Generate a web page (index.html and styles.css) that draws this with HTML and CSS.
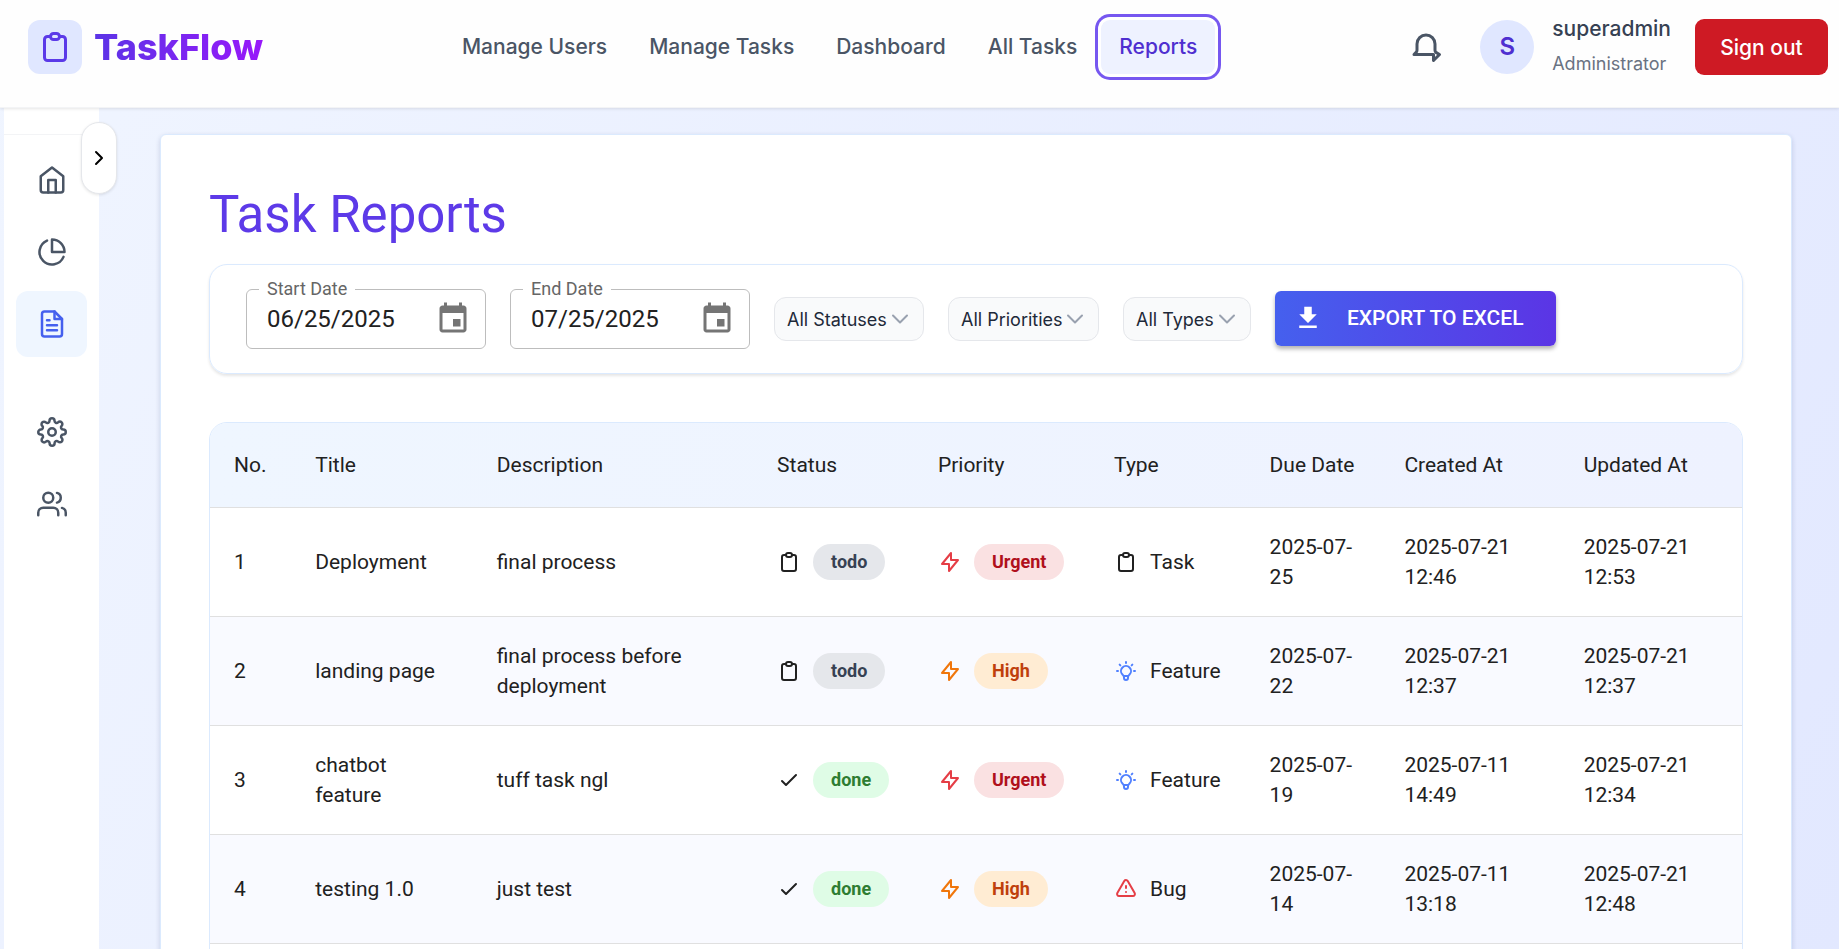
FILE: index.html
```html
<!DOCTYPE html>
<html lang="en">
<head>
<meta charset="utf-8">
<title>TaskFlow - Task Reports</title>
<link rel="stylesheet" href="styles.css">
</head>
<body>
<svg class="sprite" aria-hidden="true">
  <symbol id="clipboard" viewBox="0 0 24 24"><path d="M9 5H7a2 2 0 00-2 2v12a2 2 0 002 2h10a2 2 0 002-2V7a2 2 0 00-2-2h-2M9 5a2 2 0 002 2h2a2 2 0 002-2M9 5a2 2 0 012-2h2a2 2 0 012 2"/></symbol>
  <symbol id="bolt" viewBox="0 0 24 24"><path d="M13 10V3L4 14h7v7l9-11h-7z"/></symbol>
  <symbol id="check" viewBox="0 0 24 24"><path d="M5 13l4 4L19 7"/></symbol>
  <symbol id="bulb" viewBox="0 0 24 24"><path d="M9.663 17h4.673M12 3v1m6.364 1.636l-.707.707M21 12h-1M4 12H3m3.343-5.657l-.707-.707m2.828 9.9a5 5 0 117.072 0l-.548.547A3.374 3.374 0 0014 18.469V19a2 2 0 11-4 0v-.531c0-.895-.356-1.754-.988-2.386l-.548-.547z"/></symbol>
  <symbol id="warning" viewBox="0 0 24 24"><path d="M12 9v2m0 4h.01m-6.938 4h13.856c1.54 0 2.502-1.667 1.732-3L13.732 4c-.77-1.333-2.694-1.333-3.464 0L3.34 16c-.77 1.333.192 3 1.732 3z"/></symbol>
  <symbol id="calendar" viewBox="0 0 24 24"><path d="M17 12h-5v5h5v-5zM16 1v2H8V1H6v2H5c-1.11 0-1.99.9-1.99 2L3 19c0 1.1.89 2 2 2h14c1.1 0 2-.9 2-2V5c0-1.1-.9-2-2-2h-1V1h-2zm3 18H5V8h14v11z"/></symbol>
  <symbol id="chevron" viewBox="0 0 24 24"><path d="M5 8.500l7 7 7-7"/></symbol>
</svg>
<div class="app">
  <header class="topbar">
    <a class="brand" href="#">
      <span class="brand-mark"><svg class="icon icon-xl"><use href="#clipboard"/></svg></span>
      <span class="brand-name">TaskFlow</span>
    </a>
    <nav class="nav">
      <a href="#">Manage Users</a>
      <a href="#">Manage Tasks</a>
      <a href="#">Dashboard</a>
      <a href="#">All Tasks</a>
      <a href="#" class="active">Reports</a>
    </nav>
    <div class="account">
      <button class="bell" aria-label="Notifications"><svg class="icon icon-xl" viewBox="0 0 24 24"><path d="M4 17l1.400-1.400A2 2 0 006 14.200V10a6 6 0 0112 0v4.200a2 2 0 00.600 1.400L21 17l-4 4v-4H4z"/></svg></button>
      <span class="avatar">S</span>
      <div class="user"><span class="user-name">superadmin</span><span class="user-role">Administrator</span></div>
      <button class="signout">Sign out</button>
    </div>
  </header>
  <div class="body">
    <aside class="sidebar">
      <div class="side-head"><button class="toggle" aria-label="Expand sidebar"><svg class="icon" viewBox="0 0 24 24"><path d="M9 18l6-6-6-6"/></svg></button></div>
      <a href="#" aria-label="Home"><svg class="icon icon-lg" viewBox="0 0 24 24"><path d="M3 9l9-7 9 7v11a2 2 0 0 1-2 2H5a2 2 0 0 1-2-2z"/><path d="M9 22V12h6v10"/></svg></a>
      <a href="#" aria-label="Analytics"><svg class="icon icon-lg" viewBox="0 0 24 24"><path d="M21.210 15.890A10 10 0 1 1 8 2.830"/><path d="M22 12A10 10 0 0 0 12 2v10z"/></svg></a>
      <a href="#" class="active" aria-label="Reports"><svg class="icon icon-lg" viewBox="0 0 24 24"><path d="M14 2H6a2 2 0 0 0-2 2v16a2 2 0 0 0 2 2h12a2 2 0 0 0 2-2V8z"/><path d="M14 2v6h6M16 13H8M16 17H8M10 9H8"/></svg></a>
      <a href="#" class="second-group" aria-label="Settings"><svg class="icon icon-lg" viewBox="0 0 24 24"><circle cx="12" cy="12" r="3"/><path d="M19.4 15a1.65 1.65 0 0 0 .33 1.82l.06.06a2 2 0 0 1 0 2.83 2 2 0 0 1-2.83 0l-.06-.06a1.65 1.65 0 0 0-1.82-.33 1.65 1.65 0 0 0-1 1.51V21a2 2 0 0 1-2 2 2 2 0 0 1-2-2v-.09A1.65 1.65 0 0 0 9 19.4a1.65 1.65 0 0 0-1.82.33l-.06.06a2 2 0 0 1-2.83 0 2 2 0 0 1 0-2.83l.06-.06a1.65 1.65 0 0 0 .33-1.82 1.65 1.65 0 0 0-1.51-1H3a2 2 0 0 1-2-2 2 2 0 0 1 2-2h.09A1.65 1.65 0 0 0 4.6 9a1.65 1.65 0 0 0-.33-1.82l-.06-.06a2 2 0 0 1 0-2.83 2 2 0 0 1 2.83 0l.06.06a1.65 1.65 0 0 0 1.82.33H9a1.65 1.65 0 0 0 1-1.51V3a2 2 0 0 1 2-2 2 2 0 0 1 2 2v.09a1.65 1.65 0 0 0 1 1.51 1.65 1.65 0 0 0 1.82-.33l.06-.06a2 2 0 0 1 2.83 0 2 2 0 0 1 0 2.83l-.06.06a1.65 1.65 0 0 0-.33 1.82V9a1.65 1.65 0 0 0 1.51 1H21a2 2 0 0 1 2 2 2 2 0 0 1-2 2h-.09a1.65 1.65 0 0 0-1.51 1z"/></svg></a>
      <a href="#" aria-label="Team"><svg class="icon icon-lg" viewBox="0 0 24 24"><path d="M17 21v-2a4 4 0 0 0-4-4H5a4 4 0 0 0-4 4v2"/><circle cx="9" cy="7" r="4"/><path d="M23 21v-2a4 4 0 0 0-3-3.870M16 3.130a4 4 0 0 1 0 7.750"/></svg></a>
    </aside>
    <main class="card">
      <h1>Task Reports</h1>
      <form class="filters">
        <fieldset class="date">
          <legend><label for="start">Start Date</label></legend>
          <input id="start" type="text" value="06/25/2025">
          <button type="button" aria-label="Choose start date"><svg class="solid"><use href="#calendar"/></svg></button>
        </fieldset>
        <fieldset class="date">
          <legend><label for="end">End Date</label></legend>
          <input id="end" type="text" value="07/25/2025">
          <button type="button" aria-label="Choose end date"><svg class="solid"><use href="#calendar"/></svg></button>
        </fieldset>
        <div class="select status"><select aria-label="Status"><option>All Statuses</option></select><svg class="icon"><use href="#chevron"/></svg></div>
        <div class="select priority"><select aria-label="Priority"><option>All Priorities</option></select><svg class="icon"><use href="#chevron"/></svg></div>
        <div class="select type"><select aria-label="Type"><option>All Types</option></select><svg class="icon"><use href="#chevron"/></svg></div>
        <button type="button" class="export"><svg viewBox="0 0 24 24"><path d="M19 9h-4V3H9v6H5l7 7 7-7zM5 18v2h14v-2H5z"/></svg>EXPORT TO EXCEL</button>
      </form>
      <div class="table-wrap">
        <table>
          <colgroup><col class="c-no"><col class="c-title"><col class="c-desc"><col class="c-status"><col class="c-priority"><col class="c-type"><col class="c-due"><col class="c-created"><col class="c-updated"></colgroup>
          <thead><tr><th>No.</th><th>Title</th><th>Description</th><th>Status</th><th>Priority</th><th>Type</th><th>Due Date</th><th>Created At</th><th>Updated At</th></tr></thead>
          <tbody>
            <tr><td>1</td><td>Deployment</td><td>final process</td>
              <td><div class="tag"><svg class="icon"><use href="#clipboard"/></svg><span class="badge todo">todo</span></div></td>
              <td><div class="tag"><svg class="icon red"><use href="#bolt"/></svg><span class="badge urgent">Urgent</span></div></td>
              <td><div class="tag"><svg class="icon"><use href="#clipboard"/></svg>Task</div></td>
              <td>2025-07-25</td><td>2025-07-21 12:46</td><td>2025-07-21 12:53</td></tr>
            <tr><td>2</td><td>landing page</td><td>final process before deployment</td>
              <td><div class="tag"><svg class="icon"><use href="#clipboard"/></svg><span class="badge todo">todo</span></div></td>
              <td><div class="tag"><svg class="icon orange"><use href="#bolt"/></svg><span class="badge high">High</span></div></td>
              <td><div class="tag"><svg class="icon blue"><use href="#bulb"/></svg>Feature</div></td>
              <td>2025-07-22</td><td>2025-07-21 12:37</td><td>2025-07-21 12:37</td></tr>
            <tr><td>3</td><td>chatbot feature</td><td>tuff task ngl</td>
              <td><div class="tag"><svg class="icon"><use href="#check"/></svg><span class="badge done">done</span></div></td>
              <td><div class="tag"><svg class="icon red"><use href="#bolt"/></svg><span class="badge urgent">Urgent</span></div></td>
              <td><div class="tag"><svg class="icon blue"><use href="#bulb"/></svg>Feature</div></td>
              <td>2025-07-19</td><td>2025-07-11 14:49</td><td>2025-07-21 12:34</td></tr>
            <tr><td>4</td><td>testing 1.0</td><td>just test</td>
              <td><div class="tag"><svg class="icon"><use href="#check"/></svg><span class="badge done">done</span></div></td>
              <td><div class="tag"><svg class="icon orange"><use href="#bolt"/></svg><span class="badge high">High</span></div></td>
              <td><div class="tag"><svg class="icon red"><use href="#warning"/></svg>Bug</div></td>
              <td>2025-07-14</td><td>2025-07-11 13:18</td><td>2025-07-21 12:48</td></tr>
            <tr><td></td><td></td><td></td><td></td><td></td><td></td><td></td><td></td><td></td></tr>
          </tbody>
        </table>
      </div>
    </main>
  </div>
</div>
</body>
</html>
```
FILE: styles.css
```css
* { box-sizing: border-box; }
body { margin: 0; font-family: Inter, "Liberation Sans", sans-serif; font-size: 21px; color: #364153; }
a { text-decoration: none; color: inherit; }
button, input, select { font: inherit; color: inherit; }
button { border: 0; background: none; padding: 0; }
.sprite { position: absolute; width: 0; height: 0; }
.icon { width: 24px; height: 24px; flex: none; fill: none; stroke: currentColor; stroke-width: 2; stroke-linecap: round; stroke-linejoin: round; }
.icon-lg { width: 30px; height: 30px; }
.icon-xl { width: 36px; height: 36px; }

.app { height: 100vh; overflow: hidden; display: flex; flex-direction: column; background: linear-gradient(120deg, #f0f5ff, #e2e8ff); }

.topbar { flex: none; display: flex; justify-content: space-between; align-items: flex-start; height: 108px; padding: 14px 11px 0 28px; background: #fefefe; border-bottom: 1px solid #f3f4f6; box-shadow: 0 1px 3px rgba(0, 0, 0, .1); position: relative; }
.brand { display: flex; align-items: center; gap: 12px; margin-top: 6px; }
.brand-mark { display: flex; align-items: center; justify-content: center; width: 54px; height: 54px; border-radius: 12px; background: #e0e7ff; color: #5b3ae8; }
.brand-name { font-size: 36px; line-height: 48px; font-weight: 800; background: linear-gradient(90deg, #5b34e6, #9818fa); -webkit-background-clip: text; background-clip: text; color: transparent; }
.nav { display: flex; gap: 6px; margin-top: 6px; }
.nav a { height: 54px; line-height: 54px; padding: 0 18px; border-radius: 9px; font-weight: 500; color: #4a5565; white-space: nowrap; }
.nav .active { background: #eef2ff; color: #4f2fd0; box-shadow: 0 0 0 3px #fff, 0 0 0 6px #7657f0; }
.account { display: flex; align-items: center; height: 66px; }
.bell { display: flex; padding: 12px; margin-right: 24px; color: #4a5565; }
.avatar { width: 54px; height: 54px; line-height: 54px; border-radius: 50%; background: #e0e7ff; color: #4f2fd0; font-size: 24px; font-weight: 600; text-align: center; margin-right: 18px; }
.user { display: flex; flex-direction: column; gap: 8px; margin: 0 24px 4px 0; }
.user-name { font-weight: 500; line-height: 30px; }
.user-role { font-size: 18px; line-height: 24px; color: #6a7282; }
.signout { width: 133px; height: 56px; border-radius: 9px; background: #ce1a24; color: #fff; font-weight: 500; }

.body { flex: 1; min-height: 0; display: flex; }
.sidebar { flex: none; width: 95px; margin-left: 4px; background: #fff; display: flex; flex-direction: column; align-items: center; gap: 6px; color: #4a5565; }
.side-head { align-self: stretch; height: 27px; margin-bottom: 6px; border-bottom: 1px solid #f3f4f6; position: relative; }
.toggle { position: absolute; top: 14px; right: -18px; width: 36px; height: 72px; border: 1px solid #e5e7eb; border-radius: 18px; background: #fff; color: #000; display: flex; align-items: center; justify-content: center; box-shadow: 0 1px 3px rgba(0, 0, 0, .1); }
.sidebar a { width: 71px; height: 66px; border-radius: 12px; display: flex; align-items: center; justify-content: center; }
.sidebar .active { background: #eff6ff; color: #4560ee; }
.sidebar .second-group { margin-top: 36px; }

.card { flex: 1; min-width: 0; height: max-content; margin: 26px 47px 26px 61px; padding: 48px; background: #fff; border: 1px solid #dbeafe; border-radius: 6px; box-shadow: 0 2px 5px rgba(40, 60, 120, .2); font-family: Roboto, "Liberation Sans", sans-serif; color: #212121; }
h1 { margin: 0 0 18px; font-size: 51px; line-height: 63px; font-weight: 400; color: #5d3ae8; }
.filters { display: flex; align-items: center; gap: 24px; padding: 12px 36px 24px; border: 1px solid #dbeafe; border-radius: 18px; box-shadow: 0 2px 3px rgba(0, 0, 0, .1); margin-bottom: 48px; }
.date { display: flex; align-items: center; width: 240px; height: 72px; margin: 0; padding: 0 14px 12px 20px; border: 1px solid #bdbdbd; border-radius: 6px; min-width: 0; }
.date legend { margin-left: -8px; padding: 0 8px; font-size: 18px; line-height: 24px; color: #666; }
.date input { flex: 1; width: 100%; min-width: 0; padding: 0; border: 0; outline: 0; background: none; font-size: 24px; line-height: 36px; }
.date button { display: flex; }
.solid { width: 36px; height: 36px; fill: #757575; }
.select { display: grid; align-items: center; margin-top: 12px; font-family: Inter, "Liberation Sans", sans-serif; font-size: 18px; }
.select > * { grid-area: 1 / 1; }
.select select { appearance: none; height: 44px; padding: 0 12px; border: 1px solid #e5e7eb; border-radius: 12px; background: #f9fafb; color: #1e2939; }
.select .icon { justify-self: end; margin-right: 12px; color: #99a1af; pointer-events: none; }
.status { width: 150px; }
.priority { width: 151px; }
.type { width: 128px; }
.export { display: flex; align-items: center; gap: 24px; height: 55px; margin-top: 10px; padding: 0 32px 0 18px; border-radius: 6px; background: linear-gradient(90deg, #4560ee, #5b35e5); box-shadow: 0 3px 4px rgba(0, 0, 0, .3); color: #fff; font-weight: 500; white-space: nowrap; }
.export svg { width: 30px; height: 30px; fill: currentColor; }

.table-wrap { border: 1px solid #dbeafe; border-radius: 18px; overflow: hidden; }
table { width: 100%; table-layout: fixed; border-collapse: collapse; line-height: 30px; }
thead { background: linear-gradient(90deg, #eff6ff, #eef2ff); }
th { height: 84px; text-align: left; font-weight: 400; }
th, td { padding: 0 24px; border-bottom: 1px solid #e0e0e0; }
td { height: 109px; }
tbody tr:nth-child(even) { background: #f9faff; }
.c-no { width: 5.300%; }
.c-title { width: 11.850%; }
.c-desc { width: 18.300%; }
.c-status { width: 10.500%; }
.c-priority { width: 11.500%; }
.c-type { width: 10.150%; }
.c-due { width: 8.800%; }
.c-created { width: 11.700%; }
.c-updated { width: 11.900%; }
.tag { display: flex; align-items: center; gap: 12px; }
.badge { height: 36px; line-height: 36px; padding: 0 18px; border-radius: 18px; font-size: 18px; font-weight: 700; }
.todo { background: #e5e7eb; color: #364153; }
.done { background: #dffce6; color: #2e7d32; }
.urgent { background: #fae1e2; color: #b0101c; }
.high { background: #ffecd3; color: #bf3f0c; }
.red { color: #e53e46; }
.orange { color: #f0760c; }
.blue { color: #5080ff; }
```
